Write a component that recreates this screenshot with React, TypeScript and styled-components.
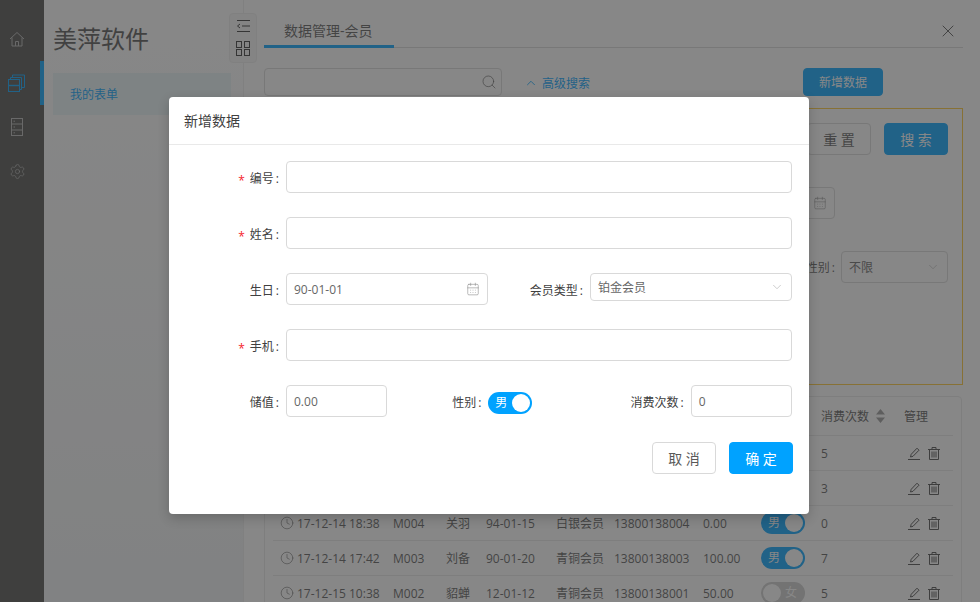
import { FC, ReactNode } from "react";
import styled, { createGlobalStyle } from "styled-components";
import { CalendarDays, ChevronDown, ChevronUp, Clock, Search, Settings, X } from "lucide-react";

const font = `"Open Sans", "Noto Sans CJK SC", sans-serif`;
const blue = "#00a2ff";

const GlobalStyle = createGlobalStyle`
  html, body {
    margin: 0;
    padding: 0;
    background: #fff;
    font-family: ${font};
    font-size: 12px;
    color: #595959;
  }
  * { box-sizing: border-box; }
`;

const Page = styled.div`
  position: relative;
  display: flex;
  width: 980px;
  height: 602px;
  overflow: hidden;
  background: #fff;
`;

/* left icon rail */
const Rail = styled.nav`
  width: 44px;
  flex-shrink: 0;
  padding-top: 17px;
  background: #4b4c49;
  display: flex;
  flex-direction: column;
`;

const RailItem = styled.div<{ $active?: boolean }>`
  height: 44px;
  padding-right: 6px;
  display: flex;
  align-items: center;
  justify-content: center;
  color: ${(p) => (p.$active ? blue : "#b3b3b3")};
  border-right: 4px solid ${(p) => (p.$active ? blue : "transparent")};
`;

const SidePanel = styled.aside`
  width: 200px;
  flex-shrink: 0;
  padding: 16px 12px 0 9px;
  background: linear-gradient(180deg, #fff 0%, #f0f2f4 100%);
  border-right: 1px solid #eee;
`;

const Brand = styled.h1`
  margin: 0;
  font-size: 24px;
  font-weight: 400;
  line-height: 46px;
  color: #505050;
`;

const MenuItem = styled.div`
  margin-top: 11px;
  height: 42px;
  padding: 1px 0 0 17px;
  line-height: 42px;
  color: ${blue};
  background: #e9f6f8;
`;

const CollapseHandle = styled.div`
  position: absolute;
  left: 229px;
  top: 13px;
  width: 28px;
  height: 50px;
  padding-top: 5px;
  display: flex;
  flex-direction: column;
  align-items: center;
  gap: 8px;
  background: #f8f8f8;
  border: 1px solid #eee;
  border-radius: 4px;
  color: #333;
`;

/* main column */
const Main = styled.main`
  flex: 1;
  min-width: 0;
  padding: 15px 17px 0 20px;
`;

const TabBar = styled.div`
  display: flex;
  justify-content: space-between;
  align-items: center;
  height: 33px;
  border-bottom: 1px solid #d9d9d9;
  color: #333;
  padding-right: 5px;
`;

const Tab = styled.div`
  width: 130px;
  height: 33px;
  padding-left: 20px;
  font-size: 14px;
  line-height: 32px;
  color: #595959;
  border-bottom: 3px solid ${blue};
`;

const Toolbar = styled.div`
  display: flex;
  align-items: center;
  margin-top: 20px;
  padding-right: 80px;
`;

const SearchBox = styled.div`
  width: 238px;
  height: 28px;
  padding-right: 4px;
  border: 1px solid #d9d9d9;
  border-radius: 4px;
  display: flex;
  align-items: center;
  justify-content: flex-end;
  color: #555;
`;

const AdvancedLink = styled.a`
  margin-left: 22px;
  padding-top: 2px;
  display: flex;
  align-items: center;
  gap: 4px;
  color: ${blue};
`;

const Button = styled.button<{ $primary?: boolean; $big?: boolean }>`
  width: ${(p) => (p.$big ? 64 : 80)}px;
  height: ${(p) => (p.$big ? 32 : 28)}px;
  border-radius: 4px;
  padding: 0;
  font-family: ${font};
  font-size: ${(p) => (p.$big ? 14 : 12)}px;
  color: ${(p) => (p.$primary ? "#fff" : "#595959")};
  background: ${(p) => (p.$primary ? blue : "#fff")};
  border: 1px solid ${(p) => (p.$primary ? blue : "#d9d9d9")};
`;

const NewButton = styled(Button)`
  margin-left: auto;
`;

const FilterPanel = styled.section`
  margin-top: 12px;
  height: 277px;
  padding: 14px 14px 0;
  border: 1px solid #ffc933;
  display: flex;
  flex-direction: column;
  gap: 32px;
`;

const FilterRow = styled.div<{ $inset?: number }>`
  display: flex;
  justify-content: flex-end;
  align-items: center;
  gap: 13px;
  padding-right: ${(p) => p.$inset ?? 0}px;
`;

const FilterLabel = styled.span`
  margin-right: -7px;
  &::after {
    content: ":";
    margin-left: 2px;
  }
`;

const TableCard = styled.section`
  margin-top: 11px;
  width: 698px;
  padding: 0 8px;
  border: 1px solid #e9e9e9;
  border-radius: 4px;
`;

const columns = "112px 53px 40px 70px 58px 89px 58px 60px 83px 57px";

const TableHead = styled.div`
  display: grid;
  grid-template-columns: ${columns};
  height: 39px;
  align-items: center;
  border-bottom: 1px solid #e9e9e9;
  color: #555;
`;

const Row = styled.div`
  display: grid;
  grid-template-columns: ${columns};
  height: 35px;
  align-items: center;
  border-bottom: 1px solid #e9e9e9;
`;

const Cell = styled.div`
  padding-left: 8px;
  display: flex;
  align-items: center;
  gap: 4px;
  white-space: nowrap;
`;

const TimeCell = styled(Cell)`
  padding-left: 7px;
  gap: 3px;
`;

const SortArrows = styled.svg`
  width: 9px;
  height: 14px;
  margin-left: 3px;
  fill: #999;
`;

const Actions = styled(Cell)`
  padding-left: 12px;
  gap: 8px;
  color: #4a4a4a;
`;

const Track = styled.span<{ $on: boolean }>`
  position: relative;
  display: inline-block;
  width: 44px;
  height: 22px;
  border-radius: 11px;
  background: ${(p) => (p.$on ? blue : "#ccc")};
  color: #fff;
  font-size: 12px;
  line-height: 22px;
  padding: ${(p) => (p.$on ? "0 0 0 7px" : "0 0 0 24px")};

  &::after {
    content: "";
    position: absolute;
    top: 2px;
    left: ${(p) => (p.$on ? "24px" : "2px")};
    width: 18px;
    height: 18px;
    border-radius: 50%;
    background: #fff;
  }
`;

const ModalTrack = styled(Track)`
  margin-top: 4px;
`;

/* modal */
const Mask = styled.div`
  position: absolute;
  inset: 0;
  background: rgba(55, 55, 55, 0.6);
`;

const Modal = styled.div`
  position: absolute;
  left: 169px;
  top: 97px;
  width: 640px;
  height: 417px;
  background: #fff;
  border-radius: 4px;
  box-shadow: 0 4px 12px rgba(0, 0, 0, 0.2);
`;

const ModalHeader = styled.header`
  height: 48px;
  padding-left: 15px;
  font-size: 14px;
  line-height: 47px;
  color: #404040;
  border-bottom: 1px solid #e9e9e9;
`;

const ModalForm = styled.form`
  padding: 16px 17px 0;
  display: flex;
  flex-direction: column;
  gap: 24px;
`;

const FormRow = styled.div<{ $cols: number }>`
  display: grid;
  grid-template-columns: repeat(${(p) => p.$cols}, 1fr);
  column-gap: ${(p) => (p.$cols === 3 ? 1 : 2)}px;
`;

const FieldWrap = styled.div`
  display: flex;
  align-items: center;
  height: 32px;
`;

const FieldLabel = styled.label`
  width: 100px;
  flex-shrink: 0;
  padding-top: 2px;
  text-align: right;
  color: #404040;

  &::after {
    content: ":";
    margin: 0 7px 0 2px;
  }
`;

const Required = styled.span`
  position: relative;
  top: 2px;
  margin-right: 5px;
  color: #f5222d;
`;

const Control = styled.div<{ $height?: number }>`
  flex: 1;
  min-width: 0;
  height: ${(p) => p.$height ?? 32}px;
  align-self: flex-start;
  padding: 0 7px;
  display: flex;
  align-items: center;
  justify-content: space-between;
  border: 1px solid #d9d9d9;
  border-radius: 4px;
  color: #666;
  background: #fff;
`;

const FixedControl = styled(Control)<{ $width: number }>`
  flex: none;
  width: ${(p) => p.$width}px;
`;

const CalendarIcon = styled(CalendarDays)`
  color: #8a8a8a;
`;

const ChevronIcon = styled(ChevronDown)`
  color: #aaa;
`;

const ModalFooter = styled.footer`
  margin-top: 25px;
  padding-right: 16px;
  display: flex;
  justify-content: flex-end;
  gap: 13px;
`;

const Field: FC<{ label: string; required?: boolean; children: ReactNode }> = ({
  label,
  required,
  children,
}) => (
  <FieldWrap>
    <FieldLabel>
      {required && <Required>*</Required>}
      {label}
    </FieldLabel>
    {children}
  </FieldWrap>
);

const HomeIcon: FC = () => (
  <svg width="16" height="16" viewBox="0 0 16 16" fill="none" stroke="currentColor" strokeWidth="1">
    <path d="M1 8L8 1.5L15 8" />
    <path d="M3 6.5V15H13V6.5" />
    <path d="M6.5 15V10.5H9.5V15" />
  </svg>
);

const StackIcon: FC = () => (
  <svg width="18" height="18" viewBox="0 0 18 18" fill="none" stroke="currentColor" strokeWidth="1">
    <rect x="0.5" y="5.5" width="11" height="12" />
    <path d="M2.5 5.5V3.5H13.5V15.5H11.5" />
    <path d="M4.5 3.5V1H16.5V13.5H13.5" />
    <path d="M0.5 11.5H11.5" strokeWidth="1.4" />
  </svg>
);

const CabinetIcon: FC = () => (
  <svg width="14" height="18" viewBox="0 0 14 18" fill="none" stroke="currentColor" strokeWidth="1">
    <rect x="1.5" y="0.5" width="11" height="17" />
    <path d="M1.5 6H12.5M1.5 12H12.5M3.5 3.2H5M3.5 9H5M3.5 14.8H5" />
  </svg>
);

const OutdentIcon: FC = () => (
  <svg width="15" height="14" viewBox="0 0 15 14" fill="none" stroke="currentColor" strokeWidth="1">
    <path d="M1 1.5H14M6 7H14M1 12.5H14" />
    <path d="M4 5L1.5 7L4 9" />
  </svg>
);

const GridIcon: FC = () => (
  <svg width="14" height="15" viewBox="0 0 14 15" fill="none" stroke="currentColor" strokeWidth="1">
    <rect x="0.5" y="0.5" width="5" height="6" />
    <rect x="8.5" y="0.5" width="5" height="6" />
    <rect x="0.5" y="8.5" width="5" height="6" />
    <rect x="8.5" y="8.5" width="5" height="6" />
  </svg>
);

const PencilIcon: FC = () => (
  <svg width="12" height="13" viewBox="0 0 12 13" fill="none" stroke="currentColor" strokeWidth="1">
    <path d="M2.5 10L3.2 7.3L9 1.2L11 3.2L5 9.3Z" />
    <path d="M0 12.5H12" />
  </svg>
);

const TrashIcon: FC = () => (
  <svg width="12" height="13" viewBox="0 0 12 13" fill="none" stroke="currentColor" strokeWidth="1">
    <path d="M0 2.5H12M4 2.5V0.5H8V2.5" />
    <path d="M1.5 2.5V12.5H10.5V2.5" />
    <path d="M4 4.5V10.5M6 4.5V10.5M8 4.5V10.5" />
  </svg>
);

const rows = [
  { time: "17-12-15 11:02", id: "M006", name: "张飞", birth: "90-01-01", type: "铂金会员", phone: "13800138006", value: "0.00", male: true, count: 5 },
  { time: "17-12-15 10:50", id: "M005", name: "赵云", birth: "90-01-01", type: "黄金会员", phone: "13800138005", value: "0.00", male: true, count: 3 },
  { time: "17-12-14 18:38", id: "M004", name: "关羽", birth: "94-01-15", type: "白银会员", phone: "13800138004", value: "0.00", male: true, count: 0 },
  { time: "17-12-14 17:42", id: "M003", name: "刘备", birth: "90-01-20", type: "青铜会员", phone: "13800138003", value: "100.00", male: true, count: 7 },
  { time: "17-12-15 10:38", id: "M002", name: "貂蝉", birth: "12-01-12", type: "青铜会员", phone: "13800138001", value: "50.00", male: false, count: 5 },
];

const App: FC = () => {
  return (
    <Page>
      <GlobalStyle />
      <Rail>
        <RailItem><HomeIcon /></RailItem>
        <RailItem $active><StackIcon /></RailItem>
        <RailItem><CabinetIcon /></RailItem>
        <RailItem><Settings size={17} strokeWidth={1} /></RailItem>
      </Rail>

      <SidePanel>
        <Brand>美萍软件</Brand>
        <MenuItem>我的表单</MenuItem>
      </SidePanel>

      <CollapseHandle>
        <OutdentIcon />
        <GridIcon />
      </CollapseHandle>

      <Main>
        <TabBar>
          <Tab>数据管理-会员</Tab>
          <X size={20} strokeWidth={1} />
        </TabBar>

        <Toolbar>
          <SearchBox><Search size={16} strokeWidth={1} /></SearchBox>
          <AdvancedLink>
            <ChevronUp size={14} strokeWidth={1.5} />
            高级搜索
          </AdvancedLink>
          <NewButton $primary>新增数据</NewButton>
        </Toolbar>

        <FilterPanel>
          <FilterRow>
            <Button $big>重 置</Button>
            <Button $big $primary>搜 索</Button>
          </FilterRow>
          <FilterRow $inset={113}>
            <FixedControl $width={120}>
              <span />
              <CalendarIcon size={14} strokeWidth={1} />
            </FixedControl>
          </FilterRow>
          <FilterRow>
            <FilterLabel>性别</FilterLabel>
            <FixedControl $width={107}>
              不限
              <ChevronIcon size={14} strokeWidth={1} />
            </FixedControl>
          </FilterRow>
        </FilterPanel>

        <TableCard>
          <TableHead>
            <Cell>创建时间</Cell>
            <Cell>编号</Cell>
            <Cell>姓名</Cell>
            <Cell>生日</Cell>
            <Cell>会员类型</Cell>
            <Cell>手机</Cell>
            <Cell>储值</Cell>
            <Cell>性别</Cell>
            <Cell>
              消费次数
              <SortArrows viewBox="0 0 9 14">
                <path d="M4.5 0L9 5.5H0ZM0 8.5H9L4.5 14Z" />
              </SortArrows>
            </Cell>
            <Cell>管理</Cell>
          </TableHead>
          {rows.map((r) => (
            <Row key={r.id}>
              <TimeCell><Clock size={14} strokeWidth={1} />{r.time}</TimeCell>
              <Cell>{r.id}</Cell>
              <Cell>{r.name}</Cell>
              <Cell>{r.birth}</Cell>
              <Cell>{r.type}</Cell>
              <Cell>{r.phone}</Cell>
              <Cell>{r.value}</Cell>
              <Cell><Track $on={r.male}>{r.male ? "男" : "女"}</Track></Cell>
              <Cell>{r.count}</Cell>
              <Actions>
                <PencilIcon />
                <TrashIcon />
              </Actions>
            </Row>
          ))}
        </TableCard>
      </Main>

      <Mask />

      <Modal>
        <ModalHeader>新增数据</ModalHeader>
        <ModalForm>
          <FormRow $cols={1}>
            <Field label="编号" required><Control /></Field>
          </FormRow>
          <FormRow $cols={1}>
            <Field label="姓名" required><Control /></Field>
          </FormRow>
          <FormRow $cols={2}>
            <Field label="生日">
              <Control>
                90-01-01
                <CalendarIcon size={14} strokeWidth={1} />
              </Control>
            </Field>
            <Field label="会员类型">
              <Control $height={28}>
                铂金会员
                <ChevronIcon size={14} strokeWidth={1} />
              </Control>
            </Field>
          </FormRow>
          <FormRow $cols={1}>
            <Field label="手机" required><Control /></Field>
          </FormRow>
          <FormRow $cols={3}>
            <Field label="储值"><Control>0.00</Control></Field>
            <Field label="性别"><ModalTrack $on>男</ModalTrack></Field>
            <Field label="消费次数"><Control>0</Control></Field>
          </FormRow>
        </ModalForm>
        <ModalFooter>
          <Button type="button" $big>取 消</Button>
          <Button type="button" $big $primary>确 定</Button>
        </ModalFooter>
      </Modal>
    </Page>
  );
};

export default App;
